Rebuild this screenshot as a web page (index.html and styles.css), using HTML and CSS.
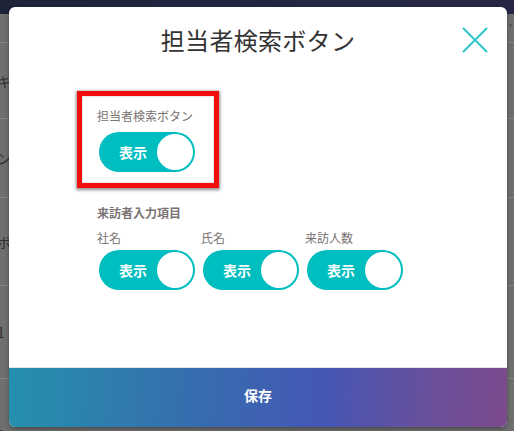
FILE: index.html
```html
<!DOCTYPE html>
<html lang="ja">
<head>
<meta charset="utf-8">
<link rel="stylesheet" href="styles.css">
</head>
<body>
<div class="page">
  <div class="topbar"></div>
  <div class="rows">
    <div class="row r1"><span class="frag-r">'</span></div>
    <div class="row r2"><span class="frag">キ</span></div>
    <div class="row r3"><span class="frag">ン</span></div>
    <div class="row r4"><span class="frag">ボ</span></div>
    <div class="row r5"><span class="frag">1</span></div>
    <div class="row r6"><span class="frag">?</span><span class="under"><span class="tl">担当者</span> しろをかいだれる</span></div>
  </div>
</div>

<div class="modal">
  <div class="modal-head">
    <h1 class="title">担当者検索ボタン</h1>
    <button class="close" aria-label="閉じる">
      <svg width="26" height="26" viewBox="0 0 26 26"><path d="M1 1 L25 25 M25 1 L1 25" stroke="#2ec6c9" stroke-width="2" fill="none"/></svg>
    </button>
  </div>
  <div class="modal-body">
    <div class="highlight">
      <div class="label">担当者検索ボタン</div>
      <div class="toggle"><span class="toggle-text">表示</span><span class="knob"></span></div>
    </div>
    <div class="section">
      <div class="section-label">来訪者入力項目</div>
      <div class="fields">
        <div class="field">
          <div class="label">社名</div>
          <div class="toggle"><span class="toggle-text">表示</span><span class="knob"></span></div>
        </div>
        <div class="field">
          <div class="label">氏名</div>
          <div class="toggle"><span class="toggle-text">表示</span><span class="knob"></span></div>
        </div>
        <div class="field">
          <div class="label">来訪人数</div>
          <div class="toggle"><span class="toggle-text">表示</span><span class="knob"></span></div>
        </div>
      </div>
    </div>
  </div>
  <div class="modal-foot">保存</div>
</div>
</body>
</html>
```
FILE: styles.css
```css
* { box-sizing: border-box; }
html, body {
  margin: 0;
  padding: 0;
  width: 514px;
  height: 431px;
  overflow: hidden;
  font-family: "Noto Sans CJK JP", "Noto Sans", sans-serif;
}
body { background: #6f6f6f; position: relative; }

.page { width: 514px; height: 431px; }
.topbar {
  height: 14px;
  background: linear-gradient(90deg, #1d2438, #222744 60%, #262645);
}
.rows { display: flex; flex-direction: column; }
.row {
  border-bottom: 1px solid #848484;
  position: relative;
  display: flex;
  align-items: center;
  color: #2f2f2f;
  font-size: 14px;
}
.r1 { height: 29px; }
.r2 { height: 76px; }
.r3 { height: 79px; }
.r4 { height: 88px; }
.r5 { height: 93px; }
.r6 { height: 60px; border-bottom: none; align-items: flex-end; }
.frag { margin-left: -3px; }
.frag-r { margin-left: auto; margin-right: 2px; color: #3a3a30; font-size: 10px; }
.r6 .frag { margin-bottom: -6px; }
.under { margin-left: 160px; margin-bottom: -11px; font-size: 14px; }
.tl { color: #2d6a5f; margin-right: 20px; }

.modal {
  position: absolute;
  left: 9px;
  top: 7px;
  width: 498px;
  height: 420px;
  background: #fff;
  border-radius: 6px;
  box-shadow: 0 2px 4px rgba(0,0,0,0.35);
  display: flex;
  flex-direction: column;
  overflow: hidden;
}
.modal-head {
  position: relative;
  padding-top: 16px;
  height: 60px;
}
.title {
  margin: 0;
  text-align: center;
  font-size: 24px;
  line-height: 34px;
  font-weight: 400;
  color: #333;
  letter-spacing: 0.3px;
}
.close {
  position: absolute;
  right: 19px;
  top: 19px;
  width: 27px;
  height: 27px;
  padding: 0;
  border: 0;
  background: none;
  display: flex;
  align-items: center;
  justify-content: center;
}

.modal-body {
  flex: 1;
  padding-left: 88px;
  padding-top: 24px;
}
.highlight {
  width: fit-content;
  margin-left: -20px;
  border: 5px solid #f20c0c;
  box-shadow: 0 1px 3px 1px rgba(0,0,0,0.45), inset 0 0 2px rgba(0,0,0,0.3);
  padding: 12px 19px 11px 15px;
}
.label {
  font-size: 12px;
  line-height: 16px;
  color: #7a7373;
  margin-bottom: 8px;
}
.toggle {
  margin-left: 2px;
  width: 96px;
  height: 40px;
  border-radius: 20px;
  background: #00bdbf;
  display: flex;
  align-items: center;
  padding: 0 2px 0 20px;
}
.toggle-text {
  color: #fff;
  font-weight: 700;
  font-size: 14px;
  flex: 1;
}
.knob {
  width: 36px;
  height: 36px;
  border-radius: 50%;
  background: #fff;
}
.section { margin-top: 17px; }
.section-label {
  font-size: 12px;
  line-height: 16px;
  font-weight: 700;
  color: #7a7373;
  margin-bottom: 9px;
}
.fields { display: flex; }
.field { width: 104px; }
.field .label { margin-bottom: 4px; }

.modal-foot {
  height: 60px;
  border-top: 1px solid #dfe3ea;
  background: linear-gradient(92deg, #2590ad 0%, #356fae 35%, #4557b4 63%, #6a4f9a 85%, #7b4a8c 100%);
  color: #fff;
  font-size: 14px;
  font-weight: 700;
  display: flex;
  align-items: center;
  justify-content: center;
  padding-bottom: 5px;
}
```
